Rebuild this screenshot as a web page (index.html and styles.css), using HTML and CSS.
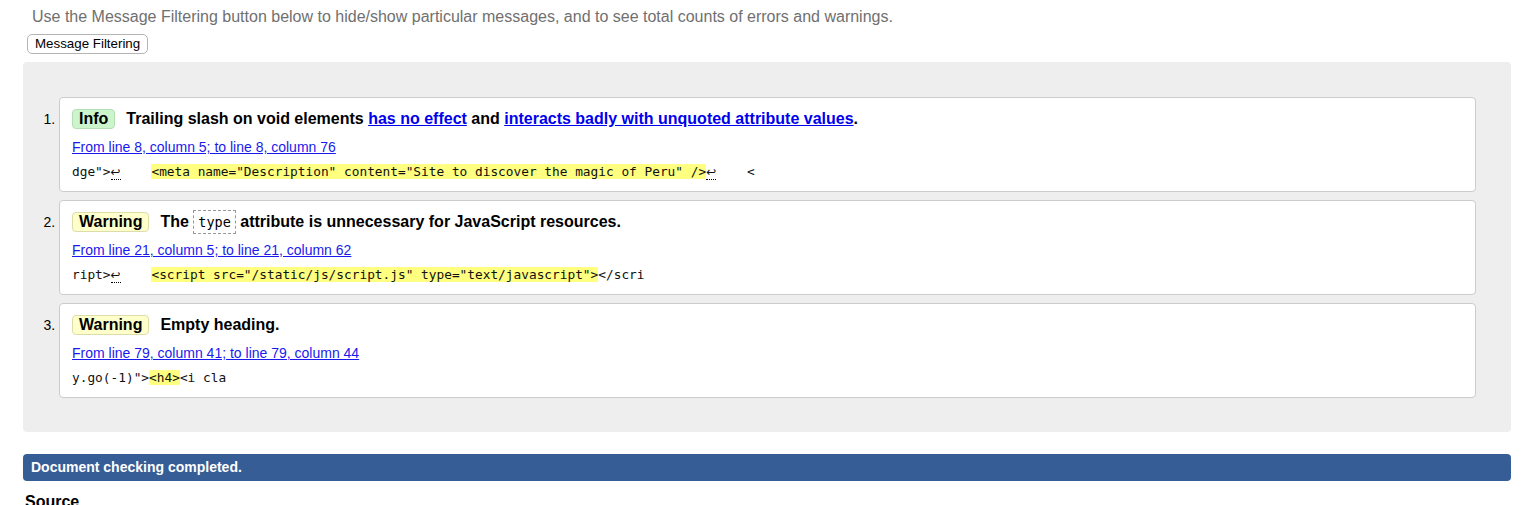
FILE: index.html
```html
<!DOCTYPE html>
<html>
<head>
<meta charset="utf-8">
<link rel="stylesheet" href="styles.css">
</head>
<body>
<div class="page">
  <p class="intro">Use the Message Filtering button below to hide/show particular messages, and to see total counts of errors and warnings.</p>
  <div class="filter-row"><button class="filter-btn">Message Filtering</button></div>
  <div class="results">
    <ol class="messages">
      <li class="msg">
        <p class="title"><span class="badge info">Info</span><span class="text">Trailing slash on void elements <a href="#">has no effect</a> and <a href="#">interacts badly with unquoted attribute values</a>.</span></p>
        <p class="loc"><a href="#">From line 8, column 5; to line 8, column 76</a></p>
        <p class="extract"><code>dge"&gt;<b class="lf">↩</b>    <mark>&lt;meta name="Description" content="Site to discover the magic of Peru" /&gt;</mark><b class="lf">↩</b>    &lt;</code></p>
      </li>
      <li class="msg">
        <p class="title"><span class="badge warning">Warning</span><span class="text">The <code class="attr">type</code> attribute is unnecessary for JavaScript resources.</span></p>
        <p class="loc"><a href="#">From line 21, column 5; to line 21, column 62</a></p>
        <p class="extract"><code>ript&gt;<b class="lf">↩</b>    <mark>&lt;script src="/static/js/script.js" type="text/javascript"&gt;</mark>&lt;/scri</code></p>
      </li>
      <li class="msg">
        <p class="title"><span class="badge warning">Warning</span><span class="text">Empty heading.</span></p>
        <p class="loc"><a href="#">From line 79, column 41; to line 79, column 44</a></p>
        <p class="extract"><code>y.go(-1)"&gt;<mark>&lt;h4&gt;</mark>&lt;i cla</code></p>
      </li>
    </ol>
  </div>
  <p class="done">Document checking completed.</p>
  <h2 class="source">Source</h2>
</div>
</body>
</html>
```

FILE: styles.css
```css
html, body {
  margin: 0;
  padding: 0;
  background: #fff;
}
body {
  font-family: "Liberation Sans", Arial, sans-serif;
  color: #000;
}
.page {
  padding: 0 17px 0 23px;
}
.intro {
  margin: 0;
  padding: 8px 0 0 9px;
  font-size: 16px;
  line-height: 18px;
  color: #707070;
}
.filter-row {
  margin-top: 8px;
  padding-left: 4px;
  display: flex;
}
.filter-btn {
  font-family: "Liberation Sans", Arial, sans-serif;
  font-size: 13.33px;
  line-height: 15px;
  height: 20px;
  padding: 1px 7px 2px;
  background: #fff;
  color: #000;
  border: 1px solid #b5b5b5;
  border-radius: 5px;
}
.results {
  margin-top: 8px;
  background: #eeeeee;
  border-radius: 4px;
  padding: 35px 35px 34px 0;
}
.messages {
  margin: 0;
  padding: 0 0 0 36px;
  font-size: 13px;
  display: flex;
  flex-direction: column;
  gap: 8px;
}
.msg {
  background: #fff;
  border: 1px solid #cccccc;
  border-radius: 4px;
  padding: 10px 12px 10px 12px;
  list-style: decimal outside;
  line-height: 18px;
}
.msg::marker {
  font-family: "Liberation Sans", Arial, sans-serif;
  font-size: 14px;
}
.msg p {
  margin: 0;
}
.title {
  font-size: 16px;
  font-weight: bold;
  height: 22px;
  line-height: 22px;
  display: flex;
  align-items: center;
}
.badge {
  display: inline-block;
  padding: 0 6px;
  line-height: 18px;
  border-radius: 4px;
  margin-right: 11px;
}
.badge.info {
  background: #ccf5cc;
  border: 1px solid #b4dfb4;
}
.badge.warning {
  background: #ffffcc;
  border: 1px solid #ddddaa;
}
.title a {
  color: #0000ee;
}
.attr {
  font-family: "DejaVu Sans Mono", "Liberation Mono", monospace;
  font-weight: normal;
  font-size: 13.5px;
  border: 1px dashed #999;
  padding: 3px 4px;
  line-height: 16px;
}
.loc {
  margin-top: 8px !important;
  font-size: 14px;
  height: 18px;
  line-height: 18px;
}
.loc a {
  color: #1a1aee;
}
.extract {
  margin-top: 7px !important;
  height: 18px;
  line-height: 18px;
  overflow: hidden;
}
.extract code {
  font-family: "DejaVu Sans Mono", "Liberation Mono", monospace;
  font-size: 12.8px;
  white-space: pre;
  color: #111;
}
.extract mark {
  background: #ffff80;
  color: #111;
}
.lf {
  font-weight: normal;
  font-family: "DejaVu Sans", sans-serif;
  font-size: 12px;
  border-bottom: 1px dotted #000;
}
.done {
  margin: 22px 0 0;
  background: #365d95;
  color: #fff;
  font-weight: bold;
  font-size: 14px;
  line-height: 27px;
  padding: 0 8px;
  border-radius: 4px;
}
.source {
  margin: 11px 0 0 2px;
  font-size: 16px;
  line-height: 20px;
  font-weight: bold;
}
```
